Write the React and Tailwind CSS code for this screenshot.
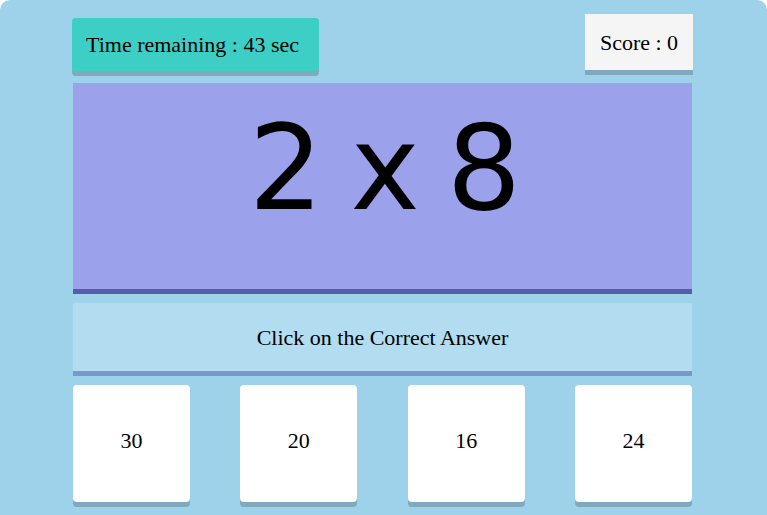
export default function App() {
  const answers = [30, 20, 16, 24]

  return (
    <div className="min-h-[515px] overflow-hidden bg-white">
      <div className="min-h-[530px] rounded-[10px] bg-[#9ed2ea] pt-[14px] font-['Liberation_Serif',serif] text-black">
        <div className="ml-[72px] w-[621px]">
          <div className="flex items-start justify-between">
            <div className="mt-[4px] flex h-[53px] w-[247px] items-center rounded-[4px] bg-[#3dcfc5] pl-[14px] text-[22px] shadow-[0_5px_0_#80a9bd]">
              Time remaining : 43 sec
            </div>
            <div className="flex h-[56px] w-[108px] items-center justify-center bg-[#f5f5f5] text-[22px] shadow-[0_5px_0_#80a9bd]">
              Score : 0
            </div>
          </div>

          <div className="mx-[1px] mt-[12px]">
            <div className="h-[211px] border-b-[5px] border-[#545ea8] bg-[#9ca1eb] pt-[86px] text-center font-['DejaVu_Sans',sans-serif] text-[117px] leading-[0] tracking-[-5px]">
              2 x 8
            </div>

            <div className="mt-[9px] flex h-[73px] items-center justify-center border-b-[5px] border-[#7898c8] bg-[#b2ddf0] text-[22px]">
              Click on the Correct Answer
            </div>

            <div className="mt-[9px] flex justify-between">
              {answers.map((a) => (
                <div
                  key={a}
                  className="flex h-[117px] w-[117px] items-center justify-center rounded-[4px] bg-white pb-[6px] text-[22px] shadow-[0_5px_0_#80a9bd]"
                >
                  {a}
                </div>
              ))}
            </div>
          </div>
        </div>
      </div>
    </div>
  )
}
